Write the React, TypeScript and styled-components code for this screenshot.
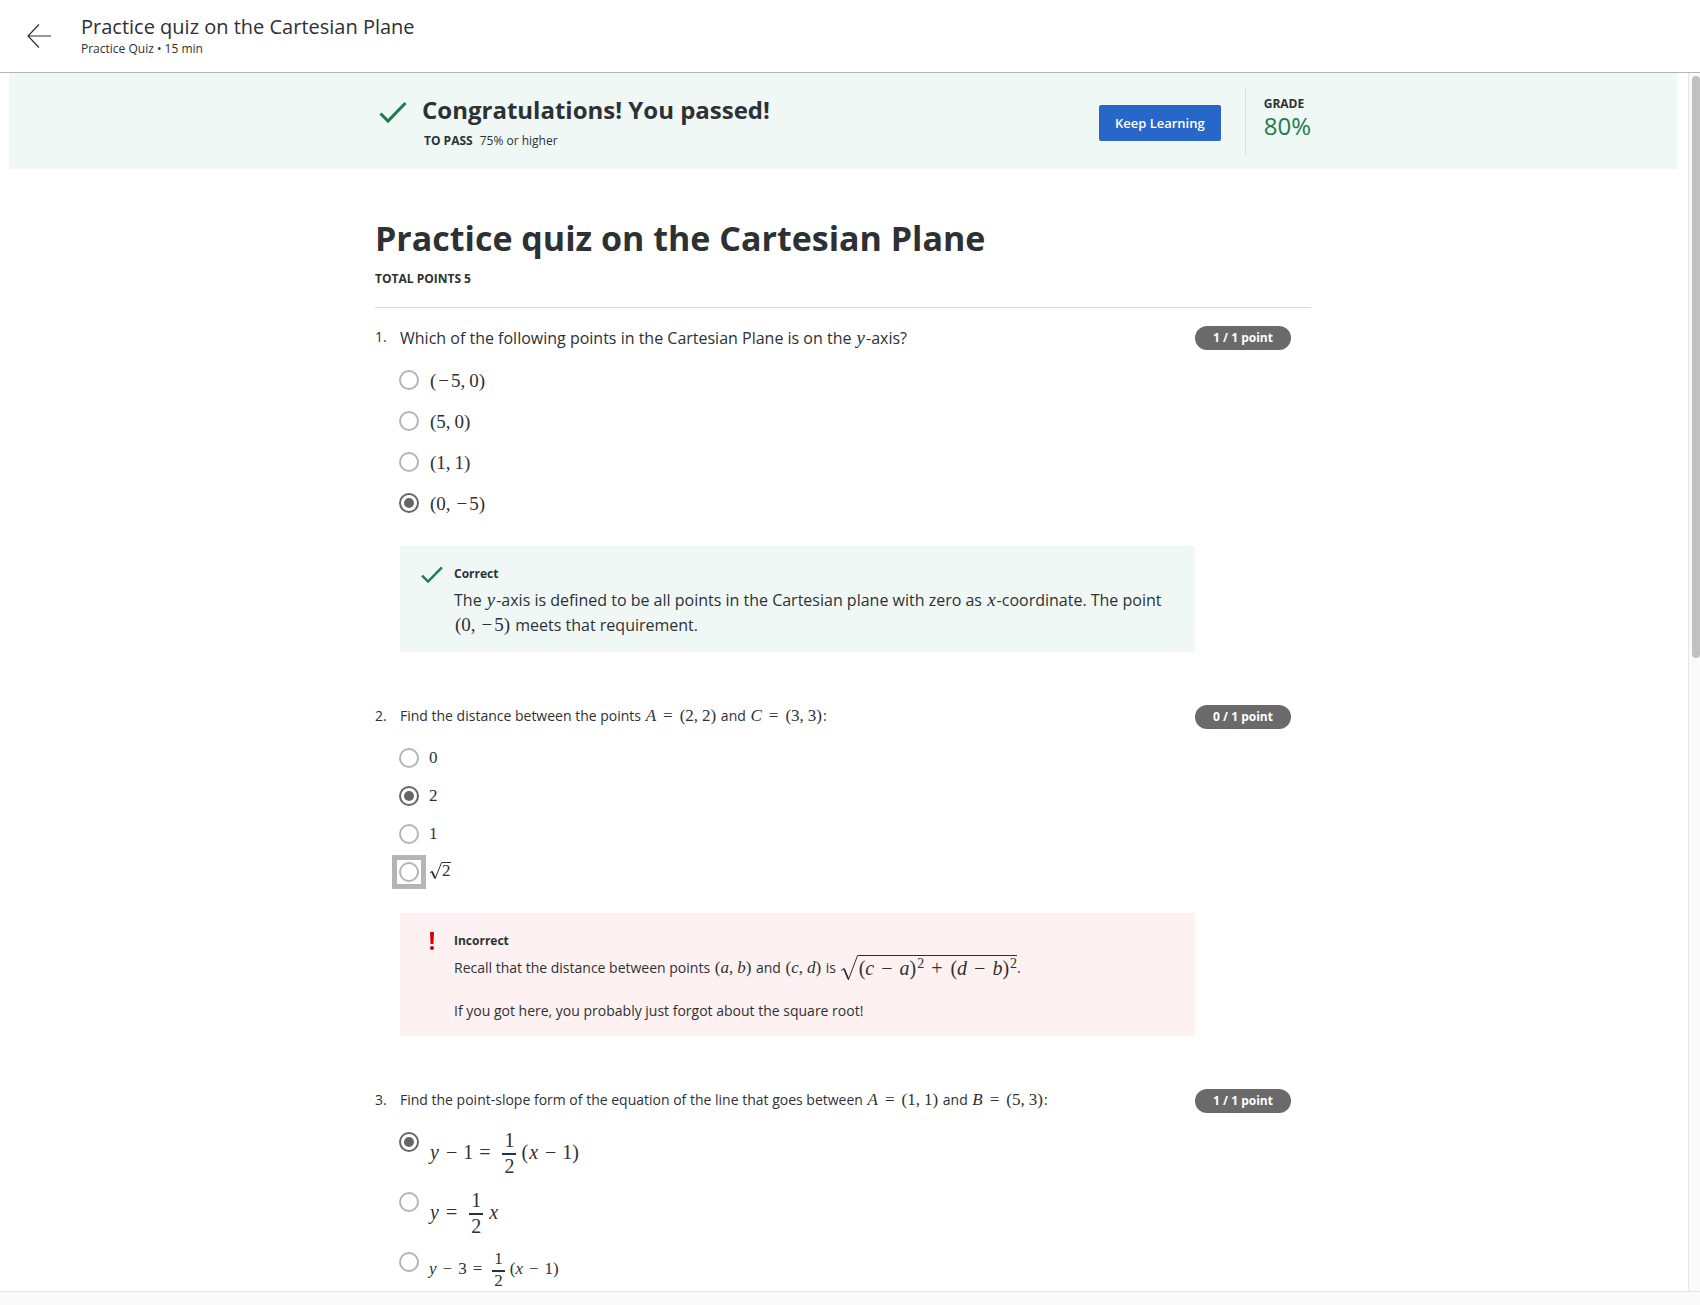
import React, { ReactNode } from 'react';
import styled, { createGlobalStyle, css } from 'styled-components';

type Size = 'large' | 'regular';

const sans = '"Open Sans", "Noto Sans", sans-serif';
const serif = '"Liberation Serif", "Times New Roman", serif';

const color = {
  text: '#2d3134',
  green: '#1d7c4d',
  greenSoft: '#f0f8f6',
  red: '#d30001',
  redSoft: '#fdf1f1',
  blue: '#2767c9',
  pill: '#6a6a6a',
  radio: '#b5b5b5',
  radioOn: '#666666',
  rule: '#dcdcdc',
  track: '#fafafa',
};

const GlobalStyle = createGlobalStyle`
  *, *::before, *::after { box-sizing: border-box; }
  body {
    margin: 0;
    background: #fff;
    color: ${color.text};
    font-family: ${sans};
    font-size: 14px;
    line-height: 22px;
  }
  h1, h2, h3, p, ol, fieldset, legend { margin: 0; padding: 0; border: 0; }
`;

/* ---------- page frame ---------- */

const Page = styled.div`
  display: flex;
  flex-direction: column;
  height: 100vh;
  overflow: hidden;
`;

const Header = styled.header`
  display: flex;
  flex: none;
  align-items: center;
  gap: 28px;
  padding: 14px 26px;
  border-bottom: 1px solid #b2b6b5;
`;

const BackLink = styled.a`
  display: flex;
  color: ${color.text};
`;

const HeaderTitle = styled.h2`
  font-size: 20px;
  font-weight: 400;
  line-height: 26px;
`;

const HeaderMeta = styled.p`
  font-size: 12px;
  line-height: 18px;
`;

const Viewport = styled.div`
  display: grid;
  flex: 1;
  grid-template: minmax(0, 1fr) 14px / minmax(0, 1fr) 12px;
  min-height: 0;
`;

const Main = styled.main`
  overflow: hidden;
  padding: 0 11px 0 9px;
`;

const ScrollTrack = styled.div`
  padding: 3px 0 3px 3px;
  border-left: 1px solid #e6e6e6;
  background: ${color.track};
`;

const ScrollThumb = styled.div`
  height: 48%;
  border-radius: 4px;
  background: #c1c1c1;
`;

const BottomTrack = styled.div`
  grid-column: 1 / -1;
  border-top: 1px solid #e4e4e4;
  background: ${color.track};
`;

const Column = styled.div`
  width: 100%;
  max-width: 936px;
  margin: 0 auto;
`;

/* ---------- result banner ---------- */

const Banner = styled.section`
  padding: 14px 0;
  background: ${color.greenSoft};
`;

const BannerRow = styled(Column)`
  display: flex;
  align-items: flex-start;
`;

const BannerIcon = styled.span`
  display: flex;
  flex: none;
  width: 47px;
  padding: 13px 0 0 3px;
  color: ${color.green};
`;

const BannerText = styled.div`
  flex: 1;
  padding-top: 7px;
`;

const BannerTitle = styled.h2`
  font-size: 24px;
  font-weight: 700;
  line-height: 32px;
`;

const PassRule = styled.p`
  padding: 6px 0 0 2px;
  font-size: 12px;
  line-height: 18px;

  strong { margin-right: 7px; }
`;

const KeepLearning = styled.button`
  height: 36px;
  margin: 18px 24px 0 0;
  padding: 0 16px;
  border: 0;
  border-radius: 2px;
  background: ${color.blue};
  color: #fff;
  font: 600 13px/36px ${sans};
`;

const Grade = styled.div`
  height: 68px;
  padding: 8px 0 0 18px;
  border-left: 1px solid ${color.rule};
`;

const GradeLabel = styled.p`
  font-size: 12px;
  font-weight: 700;
  line-height: 18px;
`;

const GradeValue = styled.p`
  color: ${color.green};
  font-size: 24px;
  line-height: 26px;
`;

/* ---------- quiz ---------- */

const QuizHead = styled.div`
  padding: 47px 0 19px;
  border-bottom: 1px solid ${color.rule};
`;

const QuizTitle = styled.h1`
  font-size: 34px;
  font-weight: 700;
  line-height: 44px;
`;

const TotalPoints = styled.p`
  padding-top: 10px;
  font-size: 12px;
  font-weight: 700;
  line-height: 18px;
`;

const Questions = styled.ol`
  display: flex;
  flex-direction: column;
  gap: 53px;
  padding-top: 18px;
  list-style: none;
`;

const QuestionItem = styled.li`
  display: grid;
  grid-template-columns: 25px minmax(0, 1fr) 96px;
  align-items: start;
  padding-right: 20px;
`;

const Prompt = styled.legend<{ $size: Size }>`
  padding-bottom: ${p => (p.$size === 'large' ? 20 : 21)}px;
  font-size: ${p => (p.$size === 'large' ? 16 : 14)}px;
  line-height: ${p => (p.$size === 'large' ? 24 : 22)}px;
`;

const Pill = styled.span`
  border-radius: 12px;
  background: ${color.pill};
  color: #fff;
  font-size: 12px;
  font-weight: 700;
  line-height: 24px;
  text-align: center;
`;

const Options = styled.div<{ $gap: number }>`
  display: flex;
  flex-direction: column;
  align-items: flex-start;
  gap: ${p => p.$gap}px;
`;

const OptionLabel = styled.label`
  display: flex;
  align-items: flex-start;
  gap: 10px;
`;

const RadioBox = styled.span<{ $focused?: boolean }>`
  display: flex;
  margin-left: -1px;
  ${p => p.$focused && css`
    outline: 5px solid ${color.radio};
    outline-offset: 2px;
  `}
`;

const Radio = styled.input`
  appearance: none;
  width: 20px;
  height: 20px;
  margin: 0;
  padding: 3px;
  border: 2px solid ${color.radio};
  border-radius: 50%;
  outline: none;

  &:checked {
    border-color: ${color.radioOn};
    background: ${color.radioOn} content-box;
  }
`;

const FeedbackBox = styled.div<{ $ok: boolean }>`
  display: grid;
  grid-template-columns: 34px minmax(0, 1fr);
  margin-top: 31px;
  padding: 19px 20px 14px;
  background: ${p => (p.$ok ? color.greenSoft : color.redSoft)};
`;

const FeedbackIcon = styled.span<{ $ok: boolean }>`
  display: flex;
  width: 24px;
  height: 20px;
  justify-content: center;
  color: ${p => (p.$ok ? color.green : color.red)};
`;

const FeedbackTitle = styled.h3`
  padding-bottom: 5px;
  font-size: 12px;
  line-height: 18px;
`;

const FeedbackText = styled.p<{ $size: Size }>`
  font-size: ${p => (p.$size === 'large' ? 16 : 14)}px;
  line-height: ${p => (p.$size === 'large' ? 25 : 22)}px;

  & + & { padding-top: 19px; }
`;

/* ---------- mathematics ---------- */

const MathText = styled.span<{ $px: number }>`
  font-family: ${serif};
  font-size: ${p => p.$px}px;
  line-height: 22px;
  white-space: nowrap;
`;

const OptionMath = styled(MathText)`
  display: flex;
  align-items: center;
  line-height: ${p => (p.$px > 17 ? 22 : 20)}px;
`;

const Var = styled.i`
  padding: 0 1px;
`;

const Open = styled.span`
  padding-left: 1px;
`;

const Close = styled.span`
  padding-right: 1px;
`;

const Neg = styled.span`
  padding: 0 2px;
`;

const Comma = styled.span`
  padding-right: 4px;
`;

const Sup = styled.sup`
  font-size: 14px;
  line-height: 1px;
  vertical-align: 7px;
`;

const Root = styled.span<{ $h: number }>`
  display: inline-flex;
  height: ${p => p.$h}px;
  line-height: ${p => p.$h - 2}px;
  vertical-align: middle;
`;

const Surd = styled.svg`
  height: 100%;
  flex: none;
`;

const Radicand = styled.span`
  border-top: 1px solid ${color.text};
`;

const Op = styled.span`
  padding: 0 6px;

  ${Radicand} & { padding: 0 7px; }
`;

const Term = styled.span`
  padding-bottom: 5px;
`;

const Fraction = styled.span<{ $px: number }>`
  display: flex;
  flex-direction: column;
  margin: 0 5px 0 ${p => (p.$px === 20 ? 6 : 4)}px;
  text-align: center;
`;

const Numerator = styled.span<{ $px: number }>`
  padding: 0 2px 5px;
  border-bottom: 2px solid ${color.text};
  line-height: ${p => (p.$px === 20 ? 16 : 13)}px;
`;

const Denominator = styled.span<{ $px: number }>`
  line-height: ${p => (p.$px === 20 ? 22 : 18)}px;
`;

function Pair({ a, b }: { a: ReactNode; b: ReactNode }) {
  return <><Open>(</Open>{a}<Comma>,</Comma>{b}<Close>)</Close></>;
}

function SquareRoot({ height, children }: { height: number; children: ReactNode }) {
  const w = height > 20 ? 18 : 13;
  return (
    <Root $h={height}>
      <Surd width={w} viewBox={`0 0 ${w} ${height}`} fill="none" stroke="currentColor" aria-label="square root of">
        <path d={`M1 ${height * 0.6} L${w * 0.22} ${height * 0.52}`} />
        <path d={`M${w * 0.22} ${height * 0.52} L${w * 0.46} ${height - 2}`} strokeWidth="1.8" />
        <path d={`M${w * 0.46} ${height - 1} L${w - 0.4} 0.5 H${w}`} />
      </Surd>
      <Radicand>{children}</Radicand>
    </Root>
  );
}

function Half({ px }: { px: number }) {
  return (
    <Fraction $px={px}>
      <Numerator $px={px}>1</Numerator>
      <Denominator $px={px}>2</Denominator>
    </Fraction>
  );
}

/* ---------- icons ---------- */

function CheckIcon({ width, height }: { width: number; height: number }) {
  return (
    <svg width={width} height={height} viewBox="0 0 30 24" fill="none" stroke="currentColor" strokeWidth="3" aria-hidden="true">
      <path d="M2.5 13.5 L10 21 L27.5 3" />
    </svg>
  );
}

function AlertIcon() {
  return (
    <svg width="6" height="20" viewBox="0 0 6 20" fill="currentColor" aria-hidden="true">
      <path d="M1 0 H5 L4.4 12 H1.6 Z" />
      <circle cx="3" cy="16" r="2" />
    </svg>
  );
}

function ArrowIcon() {
  return (
    <svg width="27" height="26" viewBox="0 0 27 26" fill="none" stroke="currentColor" strokeWidth="1.2" aria-hidden="true">
      <path d="M13 1.5 L2 13 L13 24.5 M2 13 H25" />
    </svg>
  );
}

/* ---------- composed parts ---------- */

interface QuestionProps {
  n: number;
  size: Size;
  points: string;
  prompt: ReactNode;
  options: { px: number; math: ReactNode }[];
  selected: number;
  focused?: number;
  gap: number;
  children?: ReactNode;
}

function Question({ n, size, points, prompt, options, selected, focused, gap, children }: QuestionProps) {
  return (
    <QuestionItem>
      <span>{n}.</span>
      <div>
        <fieldset>
          <Prompt $size={size}>{prompt}</Prompt>
          <Options $gap={gap}>
            {options.map((o, i) => (
              <OptionLabel key={i}>
                <RadioBox $focused={i === focused}>
                  <Radio type="radio" name={`question-${n}`} defaultChecked={i === selected} />
                </RadioBox>
                <OptionMath $px={o.px}>{o.math}</OptionMath>
              </OptionLabel>
            ))}
          </Options>
        </fieldset>
        {children}
      </div>
      <Pill>{points}</Pill>
    </QuestionItem>
  );
}

function Feedback({ ok, children }: { ok: boolean; children: ReactNode }) {
  return (
    <FeedbackBox $ok={ok}>
      <FeedbackIcon $ok={ok}>{ok ? <CheckIcon width={24} height={19} /> : <AlertIcon />}</FeedbackIcon>
      <div>
        <FeedbackTitle>{ok ? 'Correct' : 'Incorrect'}</FeedbackTitle>
        {children}
      </div>
    </FeedbackBox>
  );
}

export default function App() {
  return (
    <Page>
      <GlobalStyle />
      <Header>
        <BackLink href="#back" aria-label="Back"><ArrowIcon /></BackLink>
        <div>
          <HeaderTitle>Practice quiz on the Cartesian Plane</HeaderTitle>
          <HeaderMeta>Practice Quiz • 15 min</HeaderMeta>
        </div>
      </Header>
      <Viewport>
        <Main>
          <Banner>
            <BannerRow>
              <BannerIcon><CheckIcon width={30} height={24} /></BannerIcon>
              <BannerText>
                <BannerTitle>Congratulations! You passed!</BannerTitle>
                <PassRule><strong>TO PASS</strong>75% or higher</PassRule>
              </BannerText>
              <KeepLearning type="button">Keep Learning</KeepLearning>
              <Grade>
                <GradeLabel>GRADE</GradeLabel>
                <GradeValue>80%</GradeValue>
              </Grade>
            </BannerRow>
          </Banner>
          <Column>
            <QuizHead>
              <QuizTitle>Practice quiz on the Cartesian Plane</QuizTitle>
              <TotalPoints>TOTAL POINTS 5</TotalPoints>
            </QuizHead>
            <Questions>
              <Question
                n={1}
                size="large"
                points="1 / 1 point"
                gap={19}
                selected={3}
                prompt={<>Which of the following points in the Cartesian Plane is on the <MathText $px={19}><Var>y</Var></MathText>-axis?</>}
                options={[
                  { px: 19, math: <Pair a={<><Neg>−</Neg>5</>} b="0" /> },
                  { px: 19, math: <Pair a="5" b="0" /> },
                  { px: 19, math: <Pair a="1" b="1" /> },
                  { px: 19, math: <Pair a="0" b={<><Neg>−</Neg>5</>} /> },
                ]}
              >
                <Feedback ok>
                  <FeedbackText $size="large">
                    The <MathText $px={19}><Var>y</Var></MathText>-axis is defined to be all points in the Cartesian plane with zero as{' '}
                    <MathText $px={19}><Var>x</Var></MathText>-coordinate. The point{' '}
                    <MathText $px={19}><Pair a="0" b={<><Neg>−</Neg>5</>} /></MathText> meets that requirement.
                  </FeedbackText>
                </Feedback>
              </Question>
              <Question
                n={2}
                size="regular"
                points="0 / 1 point"
                gap={18}
                selected={1}
                focused={3}
                prompt={
                  <>
                    Find the distance between the points{' '}
                    <MathText $px={17}><Var>A</Var><Op>=</Op><Pair a="2" b="2" /></MathText> and{' '}
                    <MathText $px={17}><Var>C</Var><Op>=</Op><Pair a="3" b="3" /></MathText>:
                  </>
                }
                options={[
                  { px: 17, math: '0' },
                  { px: 17, math: '2' },
                  { px: 17, math: '1' },
                  { px: 17, math: <SquareRoot height={18}>2</SquareRoot> },
                ]}
              >
                <Feedback ok={false}>
                  <FeedbackText $size="regular">
                    Recall that the distance between points <MathText $px={17}><Pair a={<i>a</i>} b={<i>b</i>} /></MathText> and{' '}
                    <MathText $px={17}><Pair a={<i>c</i>} b={<i>d</i>} /></MathText> is{' '}
                    <MathText $px={20}>
                      <SquareRoot height={26}>
                        <Open>(</Open><i>c</i><Op>−</Op><i>a</i><Close>)</Close><Sup>2</Sup><Op>+</Op>
                        <Open>(</Open><i>d</i><Op>−</Op><i>b</i><Close>)</Close><Sup>2</Sup>
                      </SquareRoot>
                    </MathText>.
                  </FeedbackText>
                  <FeedbackText $size="regular">If you got here, you probably just forgot about the square root!</FeedbackText>
                </Feedback>
              </Question>
              <Question
                n={3}
                size="regular"
                points="1 / 1 point"
                gap={15}
                selected={0}
                prompt={
                  <>
                    Find the point-slope form of the equation of the line that goes between{' '}
                    <MathText $px={17}><Var>A</Var><Op>=</Op><Pair a="1" b="1" /></MathText> and{' '}
                    <MathText $px={17}><Var>B</Var><Op>=</Op><Pair a="5" b="3" /></MathText>:
                  </>
                }
                options={[
                  { px: 20, math: <><Term><Var>y</Var><Op>−</Op>1<Op>=</Op></Term><Half px={20} /><Term>(<Var>x</Var><Op>−</Op>1)</Term></> },
                  { px: 20, math: <><Term><Var>y</Var><Op>=</Op></Term><Half px={20} /><Term><Var>x</Var></Term></> },
                  { px: 17, math: <><Term><i>y</i><Op>−</Op>3<Op>=</Op></Term><Half px={17} /><Term>(<i>x</i><Op>−</Op>1)</Term></> },
                ]}
              />
            </Questions>
          </Column>
        </Main>
        <ScrollTrack><ScrollThumb /></ScrollTrack>
        <BottomTrack />
      </Viewport>
    </Page>
  );
}
